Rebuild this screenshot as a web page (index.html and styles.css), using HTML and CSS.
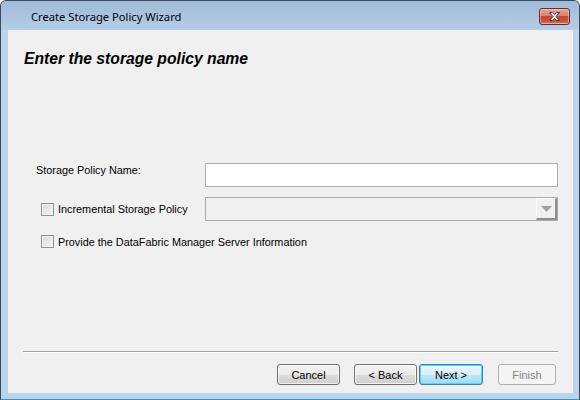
FILE: index.html
```html
<!DOCTYPE html>
<html lang="en">
<head>
    <meta charset="UTF-8">
    <meta name="viewport" content="width=device-width, initial-scale=1.0">
    <title>Create Storage Policy Wizard</title>
    <link rel="stylesheet" href="styles.css">
</head>
<body>

    <div class="window">
        <div class="titlebar">
            <span class="title">Create Storage Policy Wizard</span>
            <button class="close" type="button" aria-label="Close">
                <svg width="13" height="11" viewBox="0 0 13 11">
                    <path d="M1.5 1.5h3l2 2.3 2-2.3h3l-3.5 4 3.5 4h-3l-2-2.3-2 2.3h-3l3.5-4z"
                          fill="#ffffff" stroke="#4b3b3b" stroke-width="1" stroke-linejoin="round"/>
                </svg>
            </button>
        </div>

        <div class="client">
            <h1 class="heading">Enter the storage policy name</h1>

            <form class="policy-form" action="">
                <label class="field-label" for="policyName">Storage Policy Name:</label>
                <input class="text-input" type="text" id="policyName" name="policyName">

                <label class="check">
                    <span class="box"></span>
                    <span>Incremental Storage Policy</span>
                </label>
                <div class="combo">
                    <span class="combo-arrow">
                        <svg width="11" height="6" viewBox="0 0 11 6"><path d="M0 0h11L5.5 6z" fill="#a0a0a0"/></svg>
                    </span>
                </div>

                <label class="check wide">
                    <span class="box"></span>
                    <span>Provide the DataFabric Manager Server Information</span>
                </label>
            </form>

            <div class="footer">
                <div class="separator"></div>
                <div class="buttons">
                    <button type="button" class="btn">Cancel</button>
                    <button type="button" class="btn back">&lt; Back</button>
                    <button type="button" class="btn default">Next &gt;</button>
                    <button type="button" class="btn finish" disabled>Finish</button>
                </div>
            </div>
        </div>
    </div>

</body>
</html>
```

FILE: styles.css
```css
body {
    margin: 0;
    background: #ffffff;
    font-family: 'Liberation Sans', Arial, sans-serif;
}

.window {
    width: 580px;
    height: 400px;
    box-sizing: border-box;
    display: flex;
    flex-direction: column;
    border: 1px solid #3b4a5a;
    border-bottom-color: #2a9bbf;
    border-radius: 6px 6px 0 0;
    background: #bcd3eb;
    overflow: hidden;
}

.titlebar {
    height: 29px;
    display: flex;
    align-items: center;
    justify-content: space-between;
    padding: 0 9px 0 30px;
    background: linear-gradient(#9fbad8, #b6cde7);
}

.title {
    font-family: 'Noto Sans', sans-serif;
    font-size: 11.2px;
    color: #000000;
    margin-top: 1px;
}

.close {
    width: 31px;
    height: 17px;
    padding: 0;
    margin-top: 1px;
    display: flex;
    align-items: center;
    justify-content: center;
    border: 1px solid #6b2b26;
    border-radius: 3px;
    background: linear-gradient(#e4a597, #d7816f 45%, #c44a35 50%, #c9573f 85%, #dc8a6e);
    box-shadow: inset 0 0 0 1px rgba(255, 255, 255, 0.35);
}

.client {
    flex: 1;
    margin: 0 6px 6px 7px;
    background: #f0f0f0;
    display: flex;
    flex-direction: column;
}

.heading {
    margin: 19px 0 0 16px;
    font-size: 15.7px;
    line-height: 20px;
    font-weight: bold;
    font-style: italic;
    color: #000000;
}

.policy-form {
    margin-top: 94px;
    padding: 0 15px 0 28px;
    display: grid;
    grid-template-columns: 169px 1fr;
    row-gap: 10px;
    align-items: center;
    font-size: 10.85px;
    color: #000000;
}

.field-label {
    align-self: start;
    margin-top: 1px;
}

.text-input {
    height: 24px;
    box-sizing: border-box;
    margin: 0;
    border: 1px solid #abadb3;
    background: #ffffff;
    outline: 0;
}

.check {
    display: flex;
    align-items: center;
    gap: 4px;
    margin-left: 5px;
}

.check.wide {
    grid-column: 1 / -1;
    margin-top: 4px;
}

.box {
    width: 13px;
    height: 13px;
    box-sizing: border-box;
    border: 1px solid #8e8f8f;
    background: linear-gradient(135deg, #dcdcdc, #f4f4f4);
    box-shadow: inset 0 0 0 1px #f4f4f4;
}

.combo {
    height: 24px;
    box-sizing: border-box;
    display: flex;
    justify-content: flex-end;
    border: 1px solid #acacac;
    background: #f0f0f0;
}

.combo-arrow {
    width: 21px;
    display: flex;
    align-items: center;
    justify-content: center;
    background: #f0f0f0;
    border-left: 1px solid #ffffff;
    border-top: 1px solid #ffffff;
    border-right: 2px solid #8c8c8c;
    border-bottom: 2px solid #8c8c8c;
    box-sizing: border-box;
}

.footer {
    margin-top: auto;
    padding: 0 15px 8px 15px;
}

.separator {
    height: 1px;
    background: #a0a0a0;
    border-bottom: 1px solid #ffffff;
}

.buttons {
    display: flex;
    justify-content: flex-end;
    margin-top: 11px;
    padding-right: 2px;
}

.btn {
    width: 63px;
    height: 21px;
    padding: 0;
    font-family: 'Liberation Sans', Arial, sans-serif;
    font-size: 11px;
    color: #000000;
    border: 1px solid #707070;
    border-radius: 3px;
    background: linear-gradient(#f2f2f2, #ebebeb 50%, #dddddd 50%, #cfcfcf);
    box-shadow: inset 0 0 0 1px rgba(255, 255, 255, 0.7);
    margin-left: 15px;
}

.btn.back {
    margin-left: 14px;
}

.btn.default {
    margin-left: 2px;
    width: 64px;
    border-color: #3c7fb1;
    box-shadow: inset 0 0 0 1px #48d8fb;
    background: linear-gradient(#eaf6fd, #d9f0fc 50%, #bee6fd 50%, #a7d9f5);
}

.btn.finish {
    width: 58px;
    color: #838383;
    border-color: #adb2b5;
    background: #f4f4f4;
    box-shadow: none;
}
```
